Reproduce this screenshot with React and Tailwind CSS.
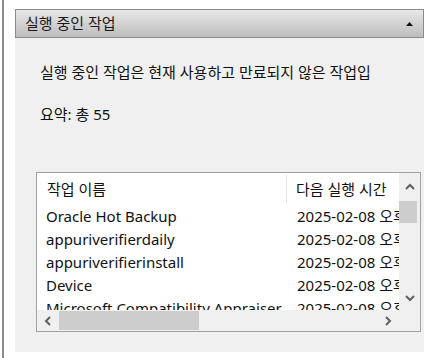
import React from "react";

const rows = [
  "Oracle Hot Backup",
  "appuriverifierdaily",
  "appuriverifierinstall",
  "Device",
  "Microsoft Compatibility Appraiser",
];

function Chevron({ dir }) {
  const pts = {
    up: "1,6 5,2 9,6",
    down: "1,2 5,6 9,2",
    left: "6,1 2,5 6,9",
    right: "2,1 6,5 2,9",
  }[dir];
  const vb = dir === "up" || dir === "down" ? "0 0 10 8" : "0 0 8 10";
  const w = dir === "up" || dir === "down" ? 10 : 8;
  const h = dir === "up" || dir === "down" ? 8 : 10;
  return (
    <svg width={w} height={h} viewBox={vb}>
      <polyline points={pts} fill="none" stroke="#606060" strokeWidth="2" />
    </svg>
  );
}

export default function App() {
  const font = { fontFamily: '"Noto Sans", "Noto Sans CJK KR", sans-serif' };
  return (
    <div className="w-[437px] h-[358px] bg-white flex overflow-hidden" style={font}>
      <div className="ml-[2px] w-[2px] h-full bg-[#8c8c8c]" />
      <div className="ml-[11px] mt-[9px] w-[409px] flex flex-col">
        <div className="h-[29px] border border-[#8a8a8a] bg-gradient-to-b from-[#e8e8e8] to-[#bdbdbd] flex items-center justify-between pl-[9px] pr-[10px]">
          <span className="text-[15px] leading-none text-[#1a1a1a]">실행 중인 작업</span>
          <svg width="7" height="4" viewBox="0 0 7 4">
            <polygon points="0,4 3.5,0 7,4" fill="#111" />
          </svg>
        </div>
        <div className="h-[314px] bg-[#f0f0f0] flex flex-col pt-[23px] pl-[25px]">
          <div className="text-[15px] leading-[22px] text-[#111] whitespace-nowrap overflow-hidden">
            실행 중인 작업은 현재 사용하고 만료되지 않은 작업입
          </div>
          <div className="mt-[20px] text-[15px] leading-[22px] text-[#111]">요약: 총 55</div>
          <div className="mt-[47px] -ml-[4px] w-[385px] h-[160px] border border-[#a0a0a0] bg-white grid grid-cols-[1fr_21px] grid-rows-[1fr_21px]">
            <div className="overflow-hidden text-[15px] text-[#111]">
              <div className="h-[32px] flex items-center whitespace-nowrap">
                <div className="w-[250px] shrink-0 pl-[10px] h-[28px] flex items-center border-r border-[#e5e5e5]">
                  작업 이름
                </div>
                <div className="pl-[9px] shrink-0">다음 실행 시간</div>
              </div>
              {rows.map((r) => (
                <div key={r} className="h-[23px] flex items-center whitespace-nowrap">
                  <div className="w-[250px] shrink-0 pl-[9px] overflow-hidden">{r}</div>
                  <div className="pl-[10px] shrink-0">2025-02-08 오후</div>
                </div>
              ))}
            </div>
            <div className="bg-[#f0f0f0] flex flex-col items-center">
              <div className="h-[28px] flex items-center justify-center">
                <Chevron dir="up" />
              </div>
              <div className="w-[18px] h-[22px] bg-[#cdcdcd] -ml-[3px]" />
              <div className="flex-1" />
              <div className="h-[24px] flex items-center justify-center">
                <Chevron dir="down" />
              </div>
            </div>
            <div className="bg-[#f0f0f0] flex items-center">
              <div className="w-[22px] flex justify-center">
                <Chevron dir="left" />
              </div>
              <div className="w-[140px] h-[19px] bg-[#cdcdcd]" />
              <div className="flex-1" />
              <div className="w-[22px] flex justify-center">
                <Chevron dir="right" />
              </div>
            </div>
            <div className="bg-[#f0f0f0]" />
          </div>
        </div>
      </div>
    </div>
  );
}
